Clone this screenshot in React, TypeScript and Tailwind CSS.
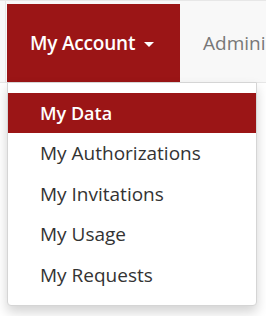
const items = ['My Data', 'My Authorizations', 'My Invitations', 'My Usage', 'My Requests'];

export default function App() {
  return (
    <div className="relative h-[316px] w-[266px] overflow-hidden bg-white font-['Open_Sans',sans-serif]">
      <nav className="flex h-[83px] border-y border-[#e7e7e7] bg-[#f8f8f8] pl-[5px]">
        <div className="flex border-l border-[#e7e7e7] pl-[1px] pt-[3px]">
          <button className="flex h-[78px] w-[173px] items-center gap-[9px] whitespace-nowrap bg-[#9b1516] pl-[23px] text-[19px] font-semibold tracking-[-0.2px] text-white">
            My Account
            <span className="mt-[2px] h-0 w-0 border-x-[5px] border-t-[5px] border-x-transparent border-t-white" />
          </button>
        </div>
        <div className="flex items-center whitespace-nowrap pl-[23px] pt-[3px] text-[19px] text-[#777]">Administration</div>
      </nav>
      <div className="absolute left-[7px] top-[82px] w-[250px] rounded-b-[4px] border border-[#d5d5d5] bg-white pb-[10px] pt-[10px] shadow-[0_6px_12px_rgba(0,0,0,0.175)]">
        {items.map((label, i) => (
          <div
            key={label}
            className={
              i === 0
                ? 'flex h-[40px] items-center bg-[#9b1516] pl-[32px] text-[18px] font-semibold text-white'
                : 'flex h-[40.5px] items-center pl-[32px] text-[19px] text-[#333]'
            }
          >
            {label}
          </div>
        ))}
      </div>
    </div>
  );
}
